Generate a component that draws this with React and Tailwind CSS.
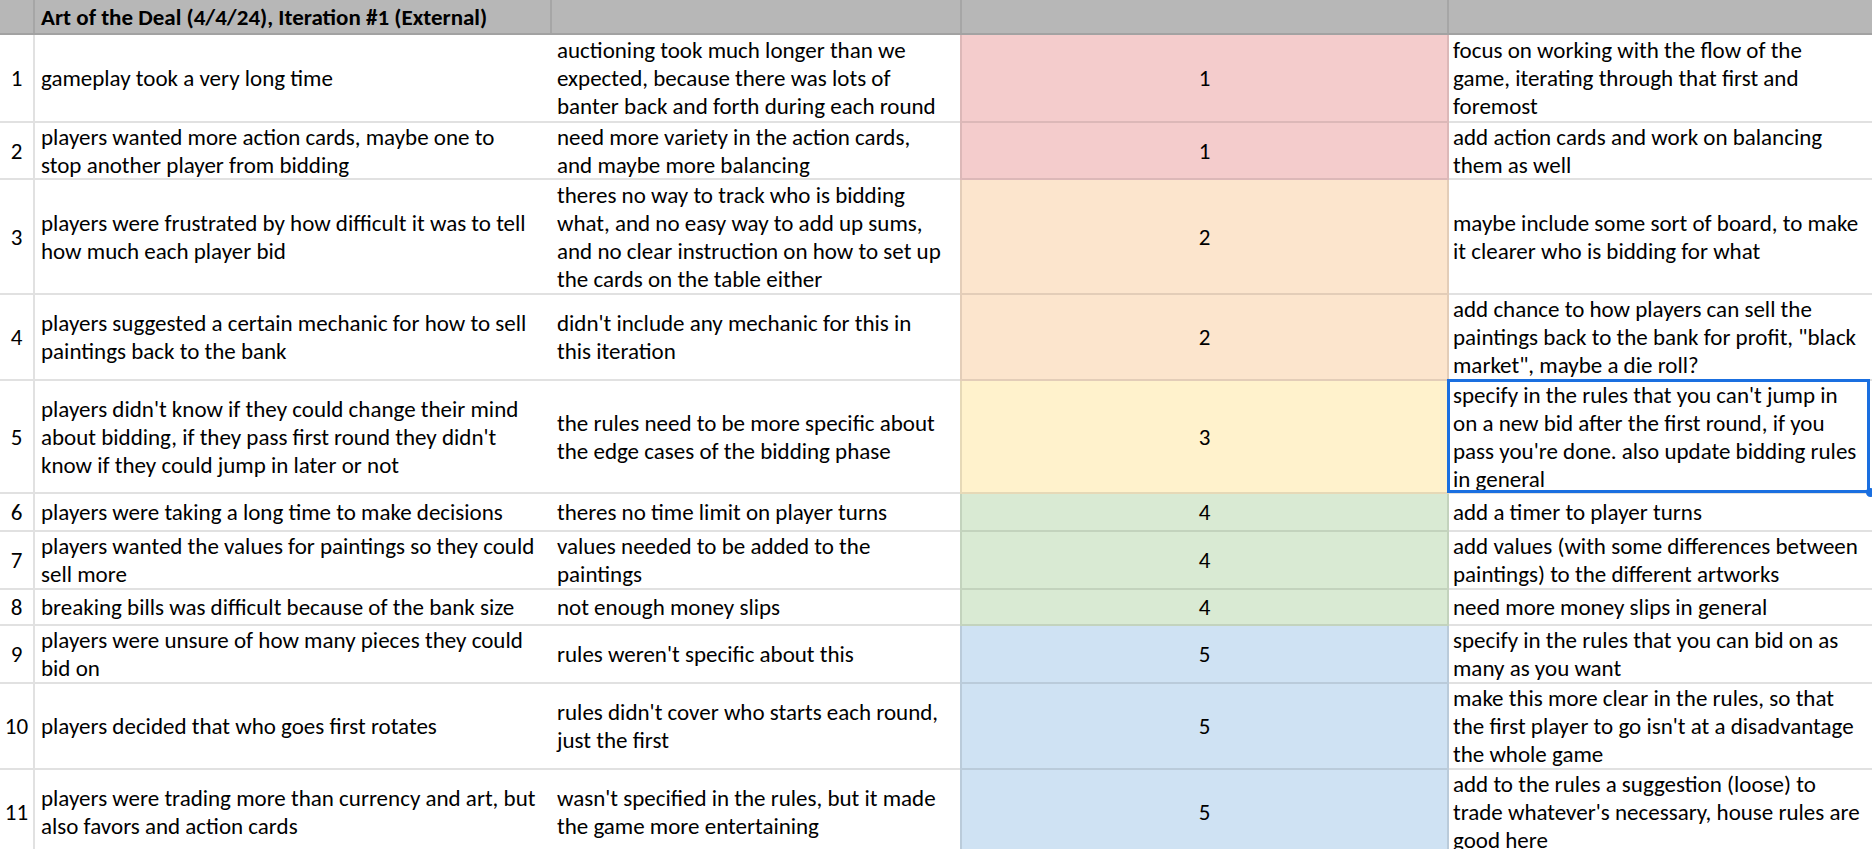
import React from "react";

const FONT = "font-['Carlito',_'Lato',_'Liberation_Sans',_sans-serif]";

const rows = [
  { n: 1, h: "h-[88px]", c: 1,
    a: ["gameplay took a very long time"],
    b: ["auctioning took much longer than we", "expected, because there was lots of", "banter back and forth during each round"],
    d: ["focus on working with the flow of the", "game, iterating through that first and", "foremost"] },
  { n: 2, h: "h-[57px]", c: 1,
    a: ["players wanted more action cards, maybe one to", "stop another player from bidding"],
    b: ["need more variety in the action cards,", "and maybe more balancing"],
    d: ["add action cards and work on balancing", "them as well"] },
  { n: 3, h: "h-[115px]", c: 2,
    a: ["players were frustrated by how difficult it was to tell", "how much each player bid"],
    b: ["theres no way to track who is bidding", "what, and no easy way to add up sums,", "and no clear instruction on how to set up", "the cards on the table either"],
    d: ["maybe include some sort of board, to make", "it clearer who is bidding for what"] },
  { n: 4, h: "h-[86px]", c: 2,
    a: ["players suggested a certain mechanic for how to sell", "paintings back to the bank"],
    b: ["didn't include any mechanic for this in", "this iteration"],
    d: ["add chance to how players can sell the", "paintings back to the bank for profit, \"black", "market\", maybe a die roll?"] },
  { n: 5, h: "h-[113px]", c: 3, sel: true,
    a: ["players didn't know if they could change their mind", "about bidding, if they pass first round they didn't", "know if they could jump in later or not"],
    b: ["the rules need to be more specific about", "the edge cases of the bidding phase"],
    d: ["specify in the rules that you can't jump in", "on a new bid after the first round, if you", "pass you're done. also update bidding rules", "in general"] },
  { n: 6, h: "h-[38px]", c: 4,
    a: ["players were taking a long time to make decisions"],
    b: ["theres no time limit on player turns"],
    d: ["add a timer to player turns"] },
  { n: 7, h: "h-[58px]", c: 4,
    a: ["players wanted the values for paintings so they could", "sell more"],
    b: ["values needed to be added to the", "paintings"],
    d: ["add values (with some differences between", "paintings) to the different artworks"] },
  { n: 8, h: "h-[36px]", c: 4,
    a: ["breaking bills was difficult because of the bank size"],
    b: ["not enough money slips"],
    d: ["need more money slips in general"] },
  { n: 9, h: "h-[58px]", c: 5,
    a: ["players were unsure of how many pieces they could", "bid on"],
    b: ["rules weren't specific about this"],
    d: ["specify in the rules that you can bid on as", "many as you want"] },
  { n: 10, h: "h-[86px]", c: 5,
    a: ["players decided that who goes first rotates"],
    b: ["rules didn't cover who starts each round,", "just the first"],
    d: ["make this more clear in the rules, so that", "the first player to go isn't at a disadvantage", "the whole game"] },
  { n: 11, h: "h-[86px]", c: 5,
    a: ["players were trading more than currency and art, but", "also favors and action cards"],
    b: ["wasn't specified in the rules, but it made", "the game more entertaining"],
    d: ["add to the rules a suggestion (loose) to", "trade whatever's necessary, house rules are", "good here"] },
];

const cColor = {
  1: "bg-[#f4cccc] border-[#dcb8b8]",
  2: "bg-[#fce5cd] border-[#e3cdb8]",
  3: "bg-[#fff2cc] border-[#e6d9b7]",
  4: "bg-[#d9ead3] border-[#c3d3bd]",
  5: "bg-[#cfe2f3] border-[#bacbda]",
};

function Lines({ lines }) {
  return (
    <div className="whitespace-nowrap">
      {lines.map((l, i) => (
        <div key={i}>{l}</div>
      ))}
    </div>
  );
}

export default function App() {
  return (
    <div className={`w-[1872px] h-[849px] overflow-hidden bg-white text-black text-[23px] leading-[28px] ${FONT}`}>
      {/* header */}
      <div className="flex h-[35px] bg-[#b7b7b7] border-b-2 border-[#a2a2a2]">
        <div className="w-[35px] shrink-0 border-r-2 border-[#a6a6a6]" />
        <div className="w-[517px] shrink-0 border-r-2 border-[#a6a6a6] px-[6px] flex items-center font-bold whitespace-nowrap">
          Art of the Deal (4/4/24), Iteration #1 (External)
        </div>
        <div className="w-[410px] shrink-0 border-r-2 border-[#a6a6a6]" />
        <div className="w-[487px] shrink-0 border-r-2 border-[#a6a6a6]" />
        <div className="flex-1" />
      </div>
      {rows.map((r) => (
        <div key={r.n} className={`flex ${r.h}`}>
          <div className="w-[35px] shrink-0 border-r-2 border-b-2 border-[#e1e1e1] flex items-center justify-center">
            {r.n}
          </div>
          <div className="w-[517px] shrink-0 border-b-2 border-[#e1e1e1] px-[6px] flex items-center">
            <Lines lines={r.a} />
          </div>
          <div className="w-[408px] shrink-0 border-b-2 border-[#e1e1e1] px-[5px] flex items-center">
            <Lines lines={r.b} />
          </div>
          <div className={`w-[489px] shrink-0 border-l-2 border-r-2 border-b-2 flex items-center justify-center ${cColor[r.c]}`}>
            {r.c}
          </div>
          <div className="relative w-[423px] shrink-0 border-b-2 border-[#e1e1e1] px-[4px] flex items-center">
            <Lines lines={r.d} />
            {r.sel && (
              <>
                <div className="absolute left-[-2px] top-[-2px] right-[2px] bottom-[-1px] border-[3px] border-[#1a6fe0] pointer-events-none" />
                <div className="absolute right-[-3px] bottom-[-5px] w-[9px] h-[9px] rounded-full bg-[#1a6fe0] z-10" />
              </>
            )}
          </div>
        </div>
      ))}
    </div>
  );
}
